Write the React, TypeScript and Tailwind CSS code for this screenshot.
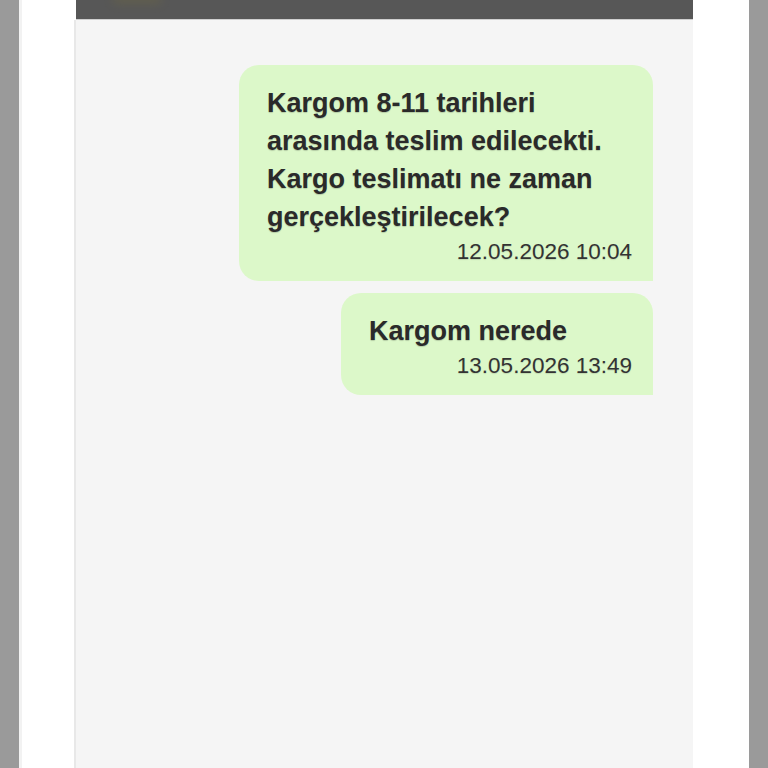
export default function App() {
  const messages = [
    {
      text: "Kargom 8-11 tarihleri arasında teslim edilecekti. Kargo teslimatı ne zaman gerçekleştirilecek?",
      time: "12.05.2026 10:04",
      width: "w-[414px]",
    },
    { text: "Kargom nerede", time: "13.05.2026 13:49", width: "w-[312px]" },
  ]

  return (
    <div className="w-[768px] h-[768px] flex bg-[#9a9a9a] px-[19px] overflow-hidden font-['Liberation_Sans',Arial,sans-serif]">
      <div className="flex-1 flex bg-white pl-[52px] pr-[56px] border-l-[3px] border-[#f2f2f2]">
        <div className="flex-1 flex flex-col">
          <div className="h-[20px] ml-[2px] bg-[#575757] border-b border-[#cfcfcf] relative overflow-hidden">
            <div className="absolute left-[36px] -top-[6px] w-[50px] h-[10px] rounded-full bg-[#6b6645] blur-[5px] opacity-50" />
          </div>
          <div className="flex-1 flex flex-col items-end gap-[12px] bg-[#f5f5f5] border-l-2 border-[#e8e8e8] pt-[45px] pr-[40px]">
            {messages.map(m => (
              <div key={m.time}
                className={`${m.width} rounded-[20px] rounded-br-none bg-[#dcf8c9] pl-[28px] pr-[21px] pt-[19px] pb-[15px]`}>
                <p className="text-[27px] leading-[38px] font-bold text-[#2a2a2a] [text-shadow:0_1px_1px_rgba(0,0,0,0.18)]">
                  {m.text}
                </p>
                <p className="text-right text-[22.5px] leading-[29px] pt-px text-[#333] [text-shadow:0_1px_1px_rgba(0,0,0,0.12)]">
                  {m.time}
                </p>
              </div>
            ))}
          </div>
        </div>
      </div>
    </div>
  )
}
